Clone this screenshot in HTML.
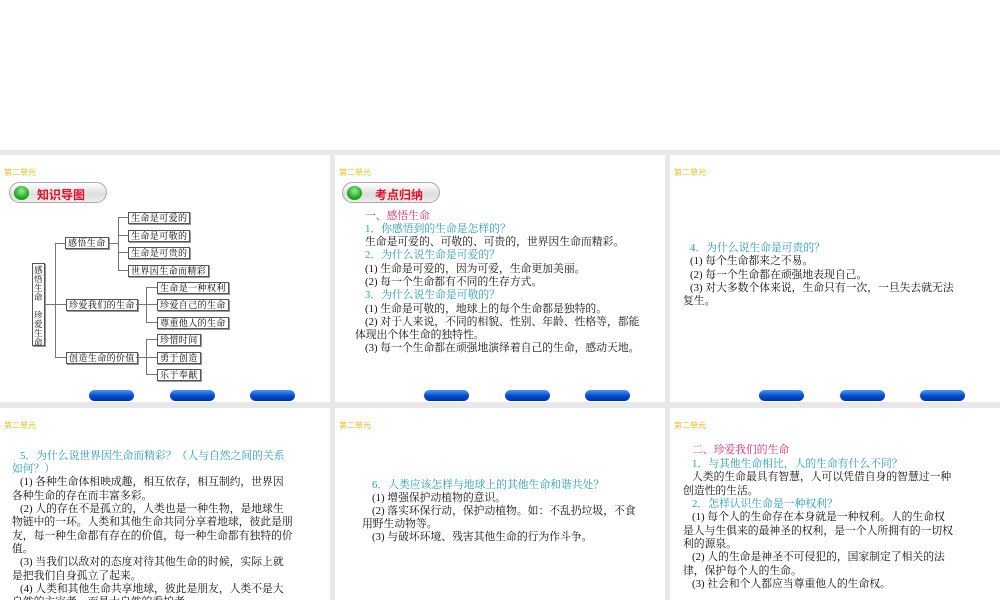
<!DOCTYPE html>
<html><head><meta charset="utf-8">
<style>
*{margin:0;padding:0;box-sizing:border-box}
body{width:1000px;height:600px;overflow:hidden;background:#fff;position:relative;font-family:"Liberation Serif","Noto Serif CJK SC","Noto Sans CJK SC",serif;}
.gray{position:absolute;left:0;top:150px;width:1000px;height:450px;background:#e8e8e8}
.s{position:absolute;background:#fff;overflow:hidden}
.u{position:absolute;left:4px;top:167px;font-size:8px;color:#f0c020;font-family:"Liberation Sans","Noto Sans CJK SC",sans-serif}
.l{position:absolute;white-space:nowrap;font-size:10.8px;line-height:13px;color:#111}
.q{color:#2a9fb0}
.h{color:#e0286e}
.pill{position:absolute;width:98px;height:21px;border-radius:11px;border:1px solid #aaa;background:linear-gradient(#fff,#ddd 60%,#eee)}
.pill i{position:absolute;left:4px;top:3px;width:15px;height:14px;border-radius:50%;background:radial-gradient(circle at 50% 35%,#9e9,#2a2 60%,#160)}
.pill b{position:absolute;left:27px;top:3px;font-size:12px;color:#e0102a;font-family:"Liberation Sans","Noto Sans CJK SC",sans-serif}
.btn{position:absolute;width:45px;height:11px;border-radius:6px;background:linear-gradient(#4a9af0,#0a4fd0 50%,#0030a0);top:235px}
.bx{position:absolute;border:1px solid #555;box-shadow:1px 1px 0 #999;font-size:9px;line-height:10px;padding:0 2px;white-space:nowrap;letter-spacing:0.4px;background:#fff}
.ln{position:absolute;background:#777}
</style></head><body>
<div class="gray"></div>

<!-- slide 1 -->
<div class="s" style="left:0;top:155px;width:330px;height:247px">
<div class="u" style="top:12px">第二单元</div>
<div class="pill" style="left:9px;top:27px"><i></i><b>知识导图</b></div>
<div class="bx" style="left:32px;top:108px;width:13px;height:83px;font-size:8.5px;line-height:9px;padding:2px 1px;white-space:normal;letter-spacing:0">感悟生命<br><br>珍爱生命</div>
<div class="ln" style="left:45px;top:149px;width:10px;height:1px"></div>
<div class="ln" style="left:55px;top:88px;width:1px;height:115px"></div>
<div class="ln" style="left:55px;top:88px;width:11px;height:1px"></div>
<div class="ln" style="left:55px;top:149px;width:11px;height:1px"></div>
<div class="ln" style="left:55px;top:202px;width:11px;height:1px"></div>
<div class="bx" style="left:65px;top:82px">感悟生命</div>
<div class="ln" style="left:108px;top:88px;width:10px;height:1px"></div>
<div class="ln" style="left:118px;top:62px;width:1px;height:54px"></div>
<div class="ln" style="left:118px;top:62px;width:10px;height:1px"></div>
<div class="ln" style="left:118px;top:80px;width:10px;height:1px"></div>
<div class="ln" style="left:118px;top:97px;width:10px;height:1px"></div>
<div class="ln" style="left:118px;top:115px;width:10px;height:1px"></div>
<div class="bx" style="left:128px;top:57px">生命是可爱的</div>
<div class="bx" style="left:128px;top:75px">生命是可敬的</div>
<div class="bx" style="left:128px;top:92px">生命是可贵的</div>
<div class="bx" style="left:128px;top:110px">世界因生命而精彩</div>
<div class="bx" style="left:66px;top:144px">珍爱我们的生命</div>
<div class="ln" style="left:136px;top:149px;width:10px;height:1px"></div>
<div class="ln" style="left:146px;top:132px;width:1px;height:36px"></div>
<div class="ln" style="left:146px;top:132px;width:11px;height:1px"></div>
<div class="ln" style="left:146px;top:149px;width:11px;height:1px"></div>
<div class="ln" style="left:146px;top:167px;width:11px;height:1px"></div>
<div class="bx" style="left:157px;top:127px">生命是一种权利</div>
<div class="bx" style="left:157px;top:144px">珍爱自己的生命</div>
<div class="bx" style="left:157px;top:162px">尊重他人的生命</div>
<div class="bx" style="left:66px;top:197px">创造生命的价值</div>
<div class="ln" style="left:136px;top:202px;width:10px;height:1px"></div>
<div class="ln" style="left:146px;top:184px;width:1px;height:36px"></div>
<div class="ln" style="left:146px;top:184px;width:11px;height:1px"></div>
<div class="ln" style="left:146px;top:202px;width:11px;height:1px"></div>
<div class="ln" style="left:146px;top:219px;width:11px;height:1px"></div>
<div class="bx" style="left:157px;top:179px">珍惜时间</div>
<div class="bx" style="left:157px;top:197px">勇于创造</div>
<div class="bx" style="left:157px;top:214px">乐于奉献</div>
<div class="btn" style="left:89px"></div><div class="btn" style="left:170px"></div><div class="btn" style="left:250px"></div>
</div>

<!-- slide 2 -->
<div class="s" style="left:335px;top:155px;width:330px;height:247px">
<div class="u" style="top:12px">第二单元</div>
<div class="pill" style="left:7px;top:27px"><i></i><b style="left:32px">考点归纳</b></div>
<div class="l h" style="left:30px;top:55px">一、感悟生命</div>
<div class="l q" style="left:30px;top:68px">1．你感悟到的生命是怎样的？</div>
<div class="l" style="left:30px;top:81px">生命是可爱的、可敬的、可贵的，世界因生命而精彩。</div>
<div class="l q" style="left:30px;top:94px">2．为什么说生命是可爱的？</div>
<div class="l" style="left:30px;top:108px">(1) 生命是可爱的，因为可爱，生命更加美丽。</div>
<div class="l" style="left:30px;top:121px">(2) 每一个生命都有不同的生存方式。</div>
<div class="l q" style="left:30px;top:134px">3．为什么说生命是可敬的？</div>
<div class="l" style="left:30px;top:148px">(1) 生命是可敬的，地球上的每个生命都是独特的。</div>
<div class="l" style="left:30px;top:161px">(2) 对于人来说，不同的相貌、性别、年龄、性格等，都能</div>
<div class="l" style="left:20px;top:174px">体现出个体生命的独特性。</div>
<div class="l" style="left:30px;top:187px">(3) 每一个生命都在顽强地演绎着自己的生命，感动天地。</div>
<div class="btn" style="left:89px"></div><div class="btn" style="left:170px"></div><div class="btn" style="left:250px"></div>
</div>

<!-- slide 3 -->
<div class="s" style="left:670px;top:155px;width:330px;height:247px">
<div class="u" style="top:12px">第二单元</div>
<div class="l q" style="left:20px;top:87px">4．为什么说生命是可贵的？</div>
<div class="l" style="left:20px;top:100px">(1) 每个生命都来之不易。</div>
<div class="l" style="left:20px;top:114px">(2) 每一个生命都在顽强地表现自己。</div>
<div class="l" style="left:20px;top:127px">(3) 对大多数个体来说，生命只有一次，一旦失去就无法</div>
<div class="l" style="left:13px;top:140px">复生。</div>
<div class="btn" style="left:89px"></div><div class="btn" style="left:170px"></div><div class="btn" style="left:250px"></div>
</div>

<!-- row 2 -->
<div class="s" style="left:0;top:408px;width:330px;height:192px">
<div class="u" style="top:12px">第二单元</div>
<div class="l q" style="left:20px;top:42px">5．为什么说世界因生命而精彩？（人与自然之间的关系</div>
<div class="l q" style="left:12px;top:55px">如何？）</div>
<div class="l" style="left:20px;top:68px">(1) 各种生命体相映成趣，相互依存，相互制约，世界因</div>
<div class="l" style="left:12px;top:82px">各种生命的存在而丰富多彩。</div>
<div class="l" style="left:20px;top:95px">(2) 人的存在不是孤立的，人类也是一种生物，是地球生</div>
<div class="l" style="left:12px;top:108px">物链中的一环。人类和其他生命共同分享着地球，彼此是朋</div>
<div class="l" style="left:12px;top:122px">友，每一种生命都有存在的价值，每一种生命都有独特的价</div>
<div class="l" style="left:12px;top:135px">值。</div>
<div class="l" style="left:20px;top:148px">(3) 当我们以敌对的态度对待其他生命的时候，实际上就</div>
<div class="l" style="left:12px;top:162px">是把我们自身孤立了起来。</div>
<div class="l" style="left:20px;top:175px">(4) 人类和其他生命共享地球，彼此是朋友，人类不是大</div>
<div class="l" style="left:12px;top:188px">自然的主宰者，而是大自然的看护者。</div>
</div>

<div class="s" style="left:335px;top:408px;width:330px;height:192px">
<div class="u" style="top:12px">第二单元</div>
<div class="l q" style="left:37px;top:71px">6．人类应该怎样与地球上的其他生命和谐共处？</div>
<div class="l" style="left:37px;top:84px">(1) 增强保护动植物的意识。</div>
<div class="l" style="left:37px;top:97px">(2) 落实环保行动，保护动植物。如：不乱扔垃圾，不食</div>
<div class="l" style="left:27px;top:110px">用野生动物等。</div>
<div class="l" style="left:37px;top:123px">(3) 与破坏环境、残害其他生命的行为作斗争。</div>
</div>

<div class="s" style="left:670px;top:408px;width:330px;height:192px">
<div class="u" style="top:12px">第二单元</div>
<div class="l h" style="left:22px;top:36px">二、珍爱我们的生命</div>
<div class="l q" style="left:22px;top:50px">1．与其他生命相比，人的生命有什么不同？</div>
<div class="l" style="left:22px;top:63px">人类的生命最具有智慧，人可以凭借自身的智慧过一种</div>
<div class="l" style="left:13px;top:77px">创造性的生活。</div>
<div class="l q" style="left:22px;top:90px">2．怎样认识生命是一种权利？</div>
<div class="l" style="left:22px;top:103px">(1) 每个人的生命存在本身就是一种权利。人的生命权</div>
<div class="l" style="left:13px;top:117px">是人与生俱来的最神圣的权利，是一个人所拥有的一切权</div>
<div class="l" style="left:13px;top:130px">利的源泉。</div>
<div class="l" style="left:22px;top:143px">(2) 人的生命是神圣不可侵犯的，国家制定了相关的法</div>
<div class="l" style="left:13px;top:157px">律，保护每个人的生命。</div>
<div class="l" style="left:22px;top:170px">(3) 社会和个人都应当尊重他人的生命权。</div>
</div>
</body></html>
